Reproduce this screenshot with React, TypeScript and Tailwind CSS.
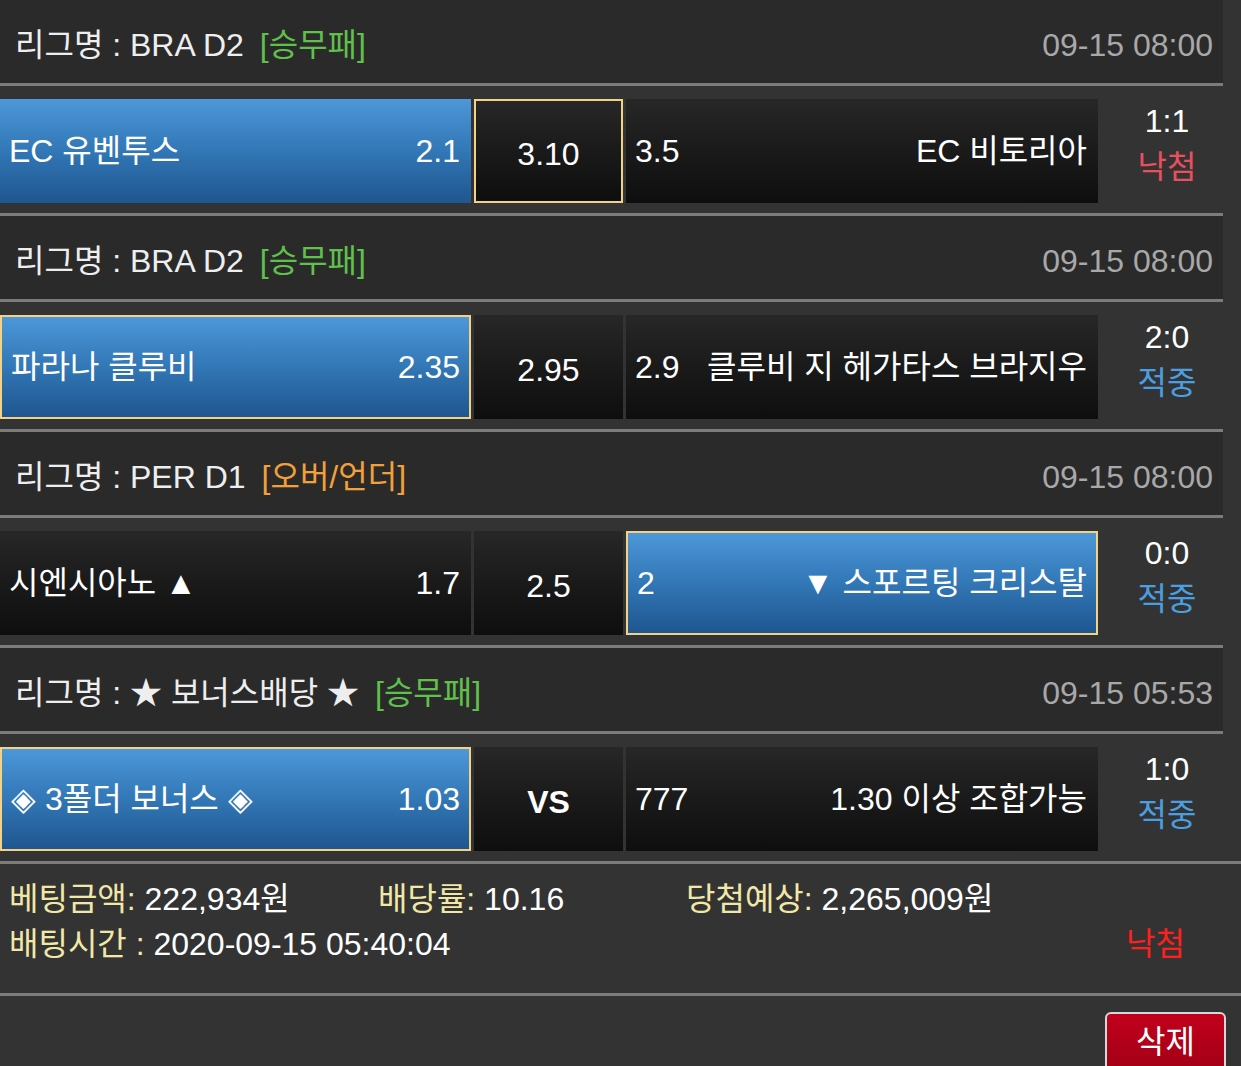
import type { ReactNode } from "react";

type Side = { left: ReactNode; right: ReactNode; selected?: boolean; border?: boolean };

interface Match {
  league: ReactNode;
  tag: string;
  tagColor: "green" | "orange";
  time: string;
  home: Side;
  draw: { label: ReactNode; border?: boolean; bold?: boolean };
  away: Side;
  score: string;
  result: "낙첨" | "적중";
}

const matches: Match[] = [
  {
    league: "BRA D2",
    tag: "[승무패]",
    tagColor: "green",
    time: "09-15 08:00",
    home: { left: "EC 유벤투스", right: "2.1", selected: true },
    draw: { label: "3.10", border: true },
    away: { left: "3.5", right: "EC 비토리아" },
    score: "1:1",
    result: "낙첨",
  },
  {
    league: "BRA D2",
    tag: "[승무패]",
    tagColor: "green",
    time: "09-15 08:00",
    home: { left: "파라나 클루비", right: "2.35", selected: true, border: true },
    draw: { label: "2.95" },
    away: { left: "2.9", right: "클루비 지 헤가타스 브라지우" },
    score: "2:0",
    result: "적중",
  },
  {
    league: "PER D1",
    tag: "[오버/언더]",
    tagColor: "orange",
    time: "09-15 08:00",
    home: { left: "시엔시아노 ▲", right: "1.7" },
    draw: { label: "2.5" },
    away: { left: "2", right: "▼ 스포르팅 크리스탈", selected: true, border: true },
    score: "0:0",
    result: "적중",
  },
  {
    league: "★ 보너스배당 ★",
    tag: "[승무패]",
    tagColor: "green",
    time: "09-15 05:53",
    home: { left: "◈ 3폴더 보너스 ◈", right: "1.03", selected: true, border: true },
    draw: { label: "VS", bold: true },
    away: { left: "777", right: "1.30 이상 조합가능" },
    score: "1:0",
    result: "적중",
  },
];

function cellBg(selected?: boolean, border?: boolean) {
  return [
    selected
      ? "bg-linear-to-b from-[#4d97d9] via-[#3277b6] to-[#1f5690]"
      : "bg-linear-to-b from-[#272727] to-[#0e0e0e]",
    border ? "border-2 border-[#f3d286]" : "",
  ].join(" ");
}

function SideCell({ side, width }: { side: Side; width: string }) {
  return (
    <div
      className={`${width} h-full flex items-center justify-between ${
        side.border ? "pl-[9px] pr-[9px]" : "pl-[9px] pr-[11px]"
      } ${cellBg(side.selected, side.border)}`}
    >
      <span className="whitespace-nowrap">{side.left}</span>
      <span className="whitespace-nowrap">{side.right}</span>
    </div>
  );
}

export default function App() {
  return (
    <div
      className="min-h-screen w-[1241px] bg-[#333333] text-[32px] leading-none text-white overflow-hidden"
      style={{ fontFamily: '"Liberation Sans", "Noto Sans CJK KR", sans-serif' }}
    >
      <div className="w-[1223px]">
        {matches.map((m, i) => (
          <div key={i}>
            {/* League header */}
            <div
              className={`h-[86px] bg-[#2a2a2a] border-b-[3px] border-[#7c7c7c] flex items-center justify-between pl-[15px] pr-[10px] pt-[7px] ${
                i > 0 ? "h-[89px] border-t-[3px]" : ""
              }`}
            >
              <div className="flex items-center whitespace-nowrap text-[#eeeeee]">
                <span>리그명 : {m.league}</span>
                <span
                  className={`ml-[16px] ${
                    m.tagColor === "green" ? "text-[#5fc04c]" : "text-[#f2a03a]"
                  }`}
                >
                  {m.tag}
                </span>
              </div>
              <span className="text-[#a8a8a8]">{m.time}</span>
            </div>

            {/* Match row */}
            <div className="h-[127px] pt-[13px] pb-[10px] flex gap-[3px]">
              <SideCell side={m.home} width="w-[471px]" />
              <div
                className={`w-[149px] h-full flex items-center justify-center pt-[6px] ${cellBg(
                  false,
                  m.draw.border
                )} ${m.draw.bold ? "font-bold" : ""}`}
              >
                {m.draw.label}
              </div>
              <SideCell side={m.away} width="w-[472px]" />
              <div className="flex-1 flex flex-col items-center justify-center gap-[14px] pb-[14px] pl-[10px]">
                <span>{m.score}</span>
                <span
                  className={
                    m.result === "낙첨" ? "text-[#e9505e]" : "text-[#4b9fe0]"
                  }
                >
                  {m.result}
                </span>
              </div>
            </div>
          </div>
        ))}
      </div>

      {/* Bet summary */}
      <div className="border-t-[3px] border-[#7c7c7c] h-[132px] pl-[9px] pt-[19px] flex flex-col gap-[13px]">
        <div className="flex whitespace-nowrap">
          <div className="w-[369px]">
            <span className="text-[#f1e8a8]">베팅금액:</span> 222,934원
          </div>
          <div className="w-[308px]">
            <span className="text-[#f1e8a8]">배당률:</span> 10.16
          </div>
          <div>
            <span className="text-[#f1e8a8]">당첨예상:</span> 2,265,009원
          </div>
        </div>
        <div className="flex whitespace-nowrap">
          <div>
            <span className="text-[#f1e8a8]">배팅시간 :</span> 2020-09-15 05:40:04
          </div>
          <span className="ml-auto mr-[56px] text-[#ff1f1f]">낙첨</span>
        </div>
      </div>

      <div className="border-t-[3px] border-[#7c7c7c] flex justify-end pt-[16px] pr-[15px]">
        <button className="w-[121px] h-[64px] rounded-[6px] border-2 border-[#d8d8d8] bg-linear-to-b from-[#c2001c] to-[#a00016] text-white text-[32px] flex items-start justify-center pt-[12px]">
          삭제
        </button>
      </div>
    </div>
  );
}
